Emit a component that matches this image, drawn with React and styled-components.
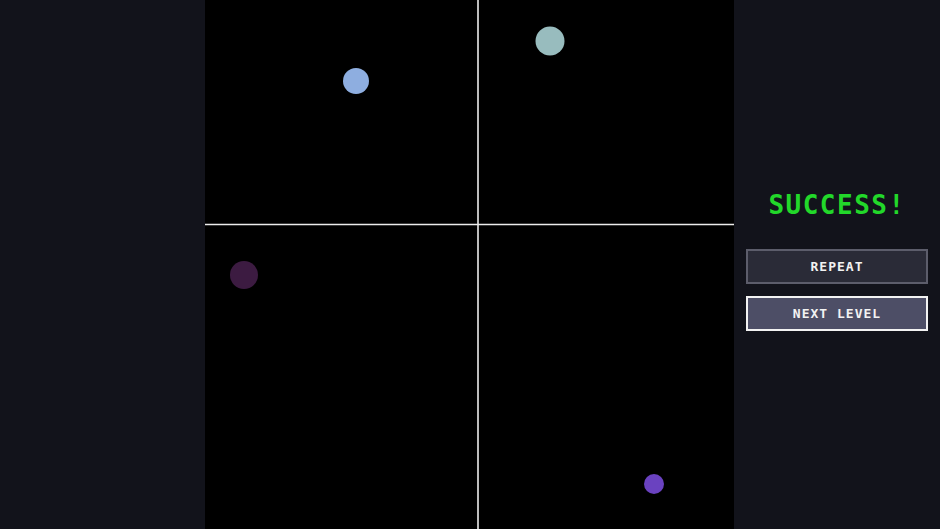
import React from "react";
import styled, { createGlobalStyle } from "styled-components";

const GlobalStyle = createGlobalStyle`
  html, body {
    margin: 0;
    padding: 0;
    background: #12131b;
  }
`;

const Page = styled.div`
  display: grid;
  grid-template-columns: 205px 529px 1fr;
  width: 940px;
  height: 529px;
  background: #12131b;
  font-family: "DejaVu Sans Mono", "Liberation Mono", monospace;
  overflow: hidden;
`;

const Board = styled.svg`
  display: block;
  width: 529px;
  height: 529px;
  background: #000;
`;

const Side = styled.div`
  display: flex;
  flex-direction: column;
  align-items: stretch;
  justify-content: center;
  padding: 0 12px 4px 12px;
`;

const Title = styled.div`
  color: #22d82a;
  font-size: 26px;
  font-weight: bold;
  letter-spacing: 1.5px;
  text-align: center;
  margin-bottom: 29px;
  margin-top: -4px;
`;

const Button = styled.button`
  height: 35px;
  margin-bottom: 12px;
  background: ${(p) => (p.$active ? "#4d4e66" : "#2a2b37")};
  border: 2px solid ${(p) => (p.$active ? "#f2f2f2" : "#5c5d6b")};
  color: #f2f2f2;
  font-family: inherit;
  font-size: 13px;
  font-weight: bold;
  letter-spacing: 1px;
  cursor: pointer;
  &:last-child {
    margin-bottom: 0;
  }
`;

const dots = [
  { x: 151, y: 81, r: 13, c: "#8eaee0" },
  { x: 345, y: 41, r: 14.5, c: "#98bcbe" },
  { x: 39, y: 275, r: 14, c: "#3c1b41" },
  { x: 449, y: 484, r: 10, c: "#6a42c0" },
];

const App = () => {
  return (
    <Page>
      <GlobalStyle />
      <div />
      <Board viewBox="0 0 529 529">
        <line x1="273" y1="0" x2="273" y2="529" stroke="#ececec" strokeWidth="1.6" />
        <line x1="0" y1="224.5" x2="529" y2="224.5" stroke="#ececec" strokeWidth="1.6" />
        {dots.map((d, i) => (
          <circle key={i} cx={d.x} cy={d.y} r={d.r} fill={d.c} />
        ))}
      </Board>
      <Side>
        <Title>SUCCESS!</Title>
        <Button>REPEAT</Button>
        <Button $active>NEXT LEVEL</Button>
      </Side>
    </Page>
  );
};

export default App;
